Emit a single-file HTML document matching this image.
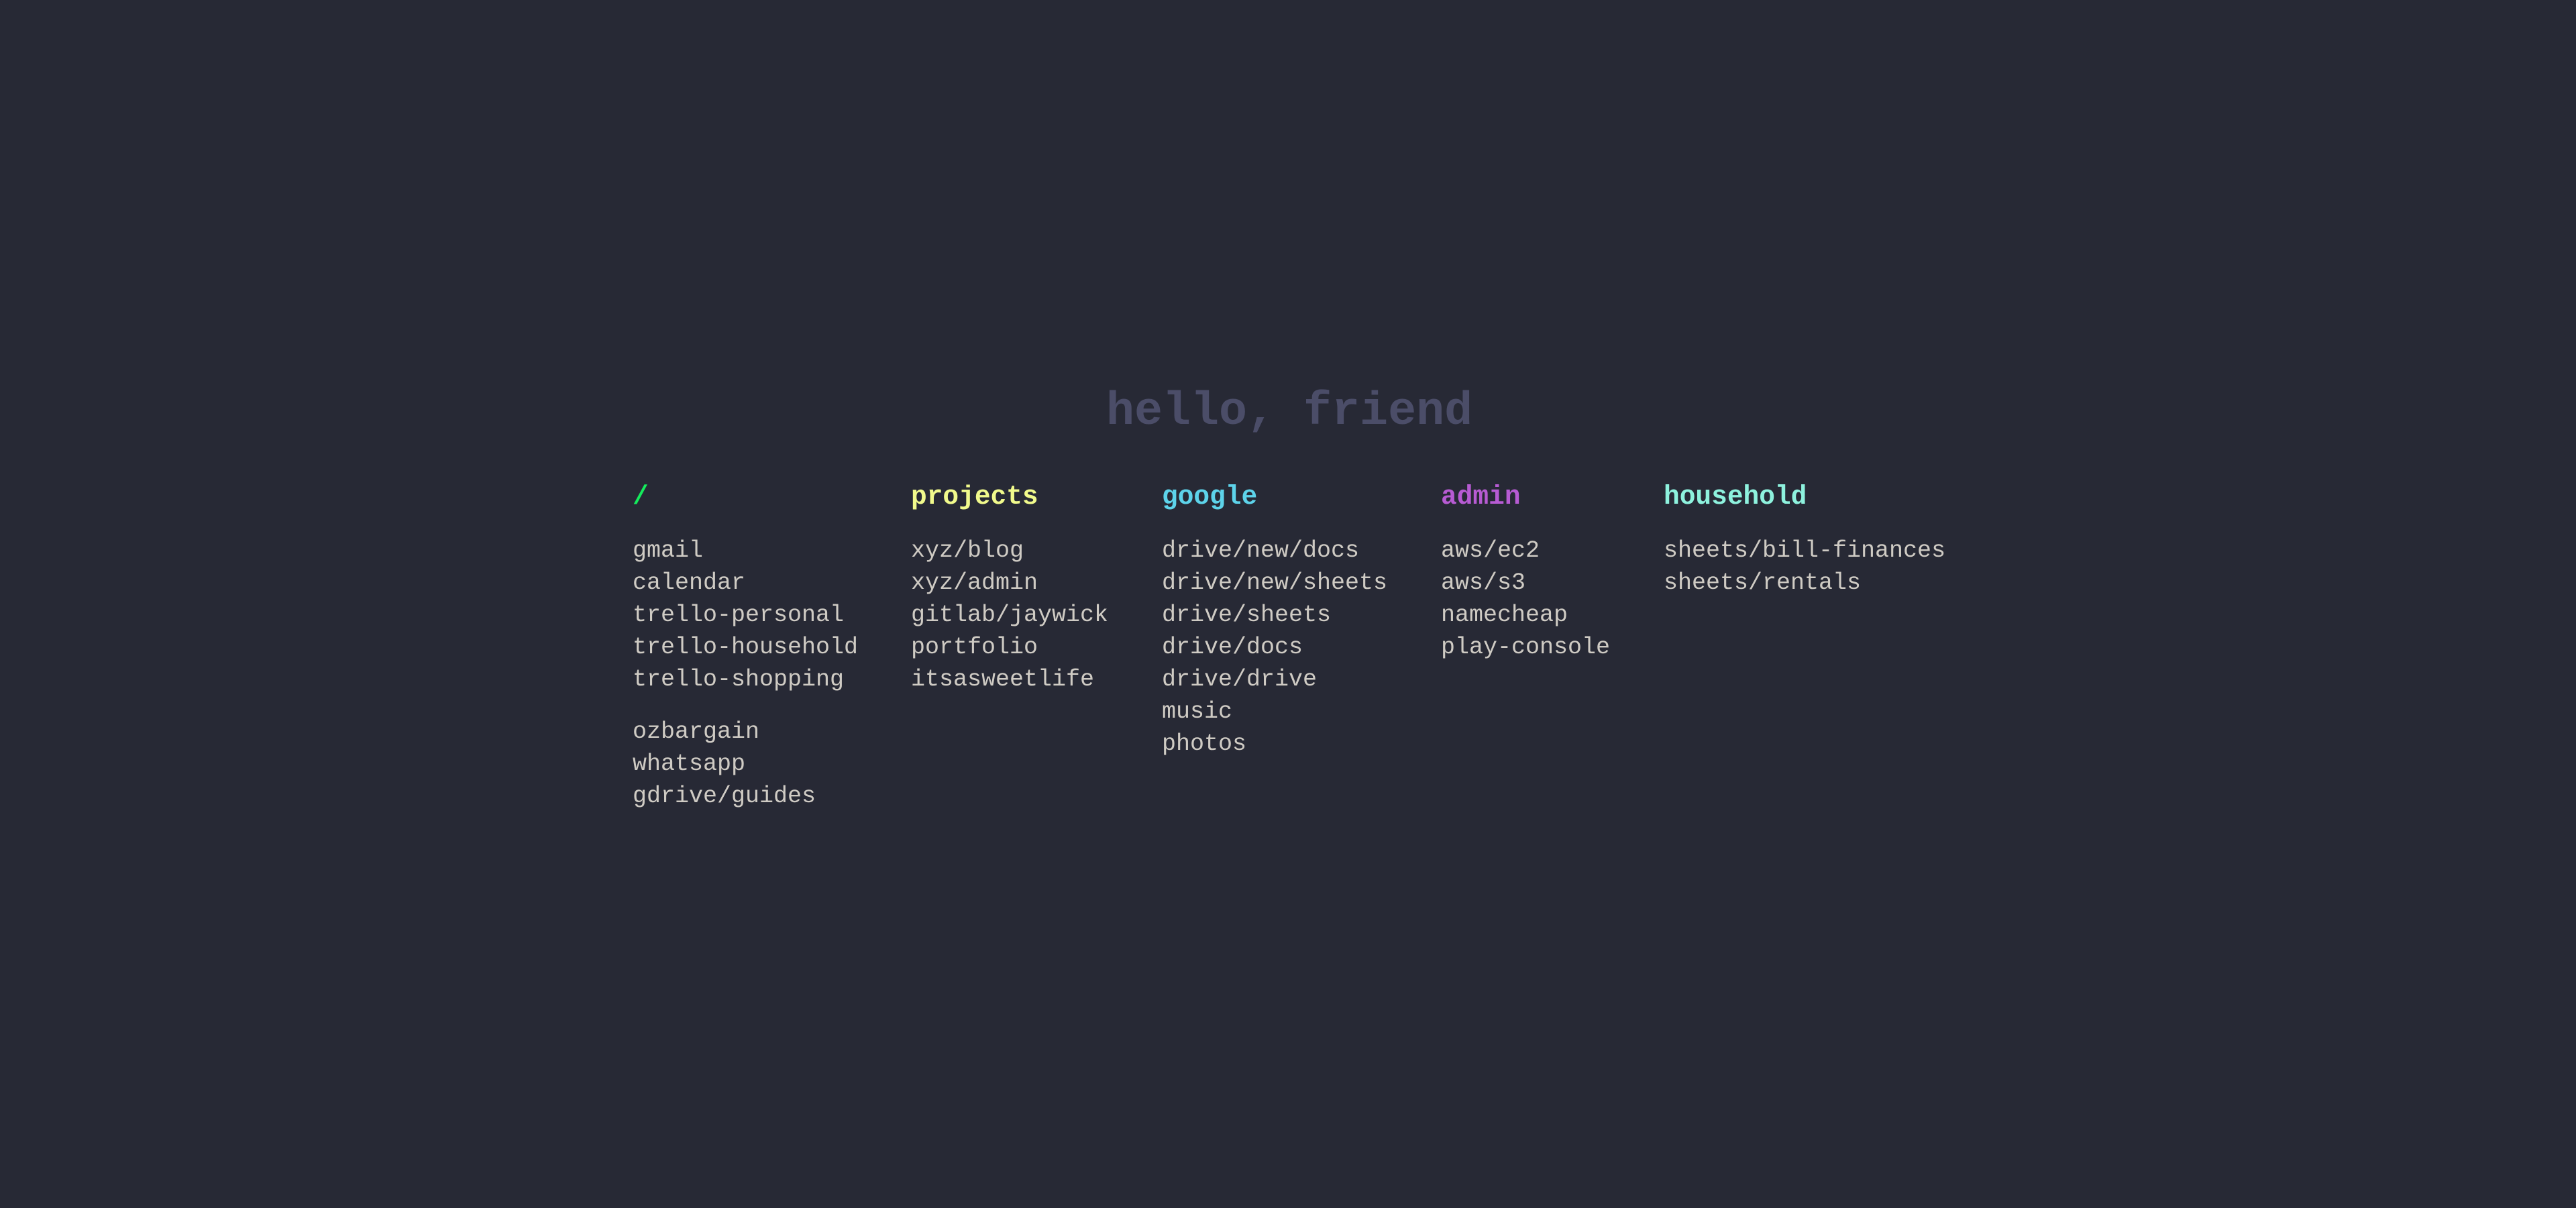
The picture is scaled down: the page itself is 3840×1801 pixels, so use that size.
<!DOCTYPE html>
<html><head><meta charset="utf-8"><style>
html,body{margin:0;padding:0;width:3840px;height:1801px;background:#272935;overflow:hidden}
body{position:relative;font-family:"Liberation Mono","DejaVu Sans Mono",monospace}
.t{position:absolute;left:1649px;top:580px;font-size:70px;line-height:70px;font-weight:bold;color:#4b4d68;white-space:pre}
.c{position:absolute;top:717px}
.h{font-size:39.5px;line-height:48px;font-weight:bold;height:48px;margin-bottom:32px;white-space:pre}
.i{font-size:35px;line-height:48px;color:#cfcbc4;white-space:pre}
.g{margin-top:30px}
</style></head><body>
<div class="t">hello, friend</div>
<div class="c" style="left:943px"><div class="h" style="color:#14ec5c">/</div>
<div class="i">gmail</div><div class="i">calendar</div><div class="i">trello-personal</div><div class="i">trello-household</div><div class="i">trello-shopping</div>
<div class="i g">ozbargain</div><div class="i">whatsapp</div><div class="i">gdrive/guides</div></div>
<div class="c" style="left:1358px"><div class="h" style="color:#f1fa8c">projects</div>
<div class="i">xyz/blog</div><div class="i">xyz/admin</div><div class="i">gitlab/jaywick</div><div class="i">portfolio</div><div class="i">itsasweetlife</div></div>
<div class="c" style="left:1732px"><div class="h" style="color:#5dd3ea">google</div>
<div class="i">drive/new/docs</div><div class="i">drive/new/sheets</div><div class="i">drive/sheets</div><div class="i">drive/docs</div><div class="i">drive/drive</div><div class="i">music</div><div class="i">photos</div></div>
<div class="c" style="left:2148px"><div class="h" style="color:#b75bd3">admin</div>
<div class="i">aws/ec2</div><div class="i">aws/s3</div><div class="i">namecheap</div><div class="i">play-console</div></div>
<div class="c" style="left:2480px"><div class="h" style="color:#8ef2de">household</div>
<div class="i">sheets/bill-finances</div><div class="i">sheets/rentals</div></div>
</body></html>
